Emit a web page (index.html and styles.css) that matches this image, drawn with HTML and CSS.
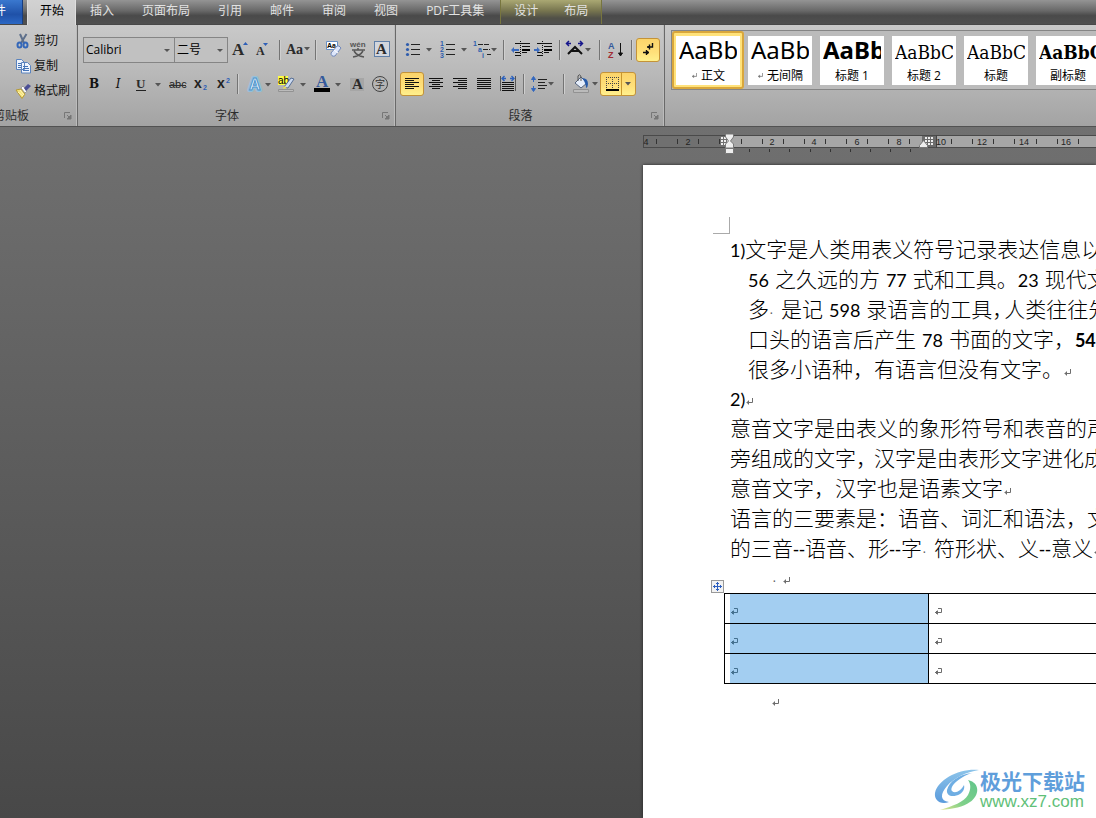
FILE: index.html
```html
<!DOCTYPE html>
<html lang="zh-CN">
<head>
<meta charset="utf-8">
<title>文档编辑</title>
<link rel="stylesheet" href="styles.css">
</head>
<body>
<svg class="defs" aria-hidden="true">
  <defs>
    <symbol id="drop" viewBox="0 0 6 4"><path d="M0 0h6L3 3.600z" fill="#555"/></symbol>
    <symbol id="ret" viewBox="0 0 8 8"><path d="M7.500 0v4.500H1.500M3.500 2.500v4M2.500 3.500v2" fill="none" stroke="#6d6d6d"/></symbol>
    <symbol id="cellret" viewBox="0 0 8 8"><path d="M4 .5h3.500v4H1M3.500 2.500v4M2.500 3v3M1.500 4v1" fill="none" stroke="currentColor"/></symbol>
    <symbol id="launch" viewBox="0 0 8 8"><path d="M.5 6V.5H6" fill="none" stroke="#777"/><path d="M7 3v4H3zM3 3l3 3" fill="#777" stroke="#777"/></symbol>
    <pattern id="dots" width="3" height="3" patternUnits="userSpaceOnUse"><path d="M0 0h2v2H0z" fill="#eee"/></pattern>
    <linearGradient id="swirl" x1="0" y1="0" x2="0" y2="1"><stop offset="0" stop-color="#8cc4ea"/><stop offset="1" stop-color="#5b9bdc"/></linearGradient>
    <linearGradient id="leaf" x1="1" y1="0" x2="0" y2="1"><stop offset="0" stop-color="#62c58b"/><stop offset=".6" stop-color="#7fd08a"/><stop offset="1" stop-color="#e3e48c"/></linearGradient>
  </defs>
</svg>

<nav class="tabs">
  <button class="tab file">文件</button>
  <button class="tab current">开始</button>
  <button class="tab">插入</button>
  <button class="tab">页面布局</button>
  <button class="tab">引用</button>
  <button class="tab">邮件</button>
  <button class="tab">审阅</button>
  <button class="tab">视图</button>
  <button class="tab">PDF工具集</button>
  <div class="context">
    <button class="tab">设计</button>
    <button class="tab">布局</button>
  </div>
</nav>

<header class="ribbon">
  <section class="group clipboard">
    <div class="clip-body">
      <button class="paste">
        <svg width="32" height="32" viewBox="0 0 32 32"><rect x="3" y="3" width="28" height="26" rx="2" fill="#e3a13d" stroke="#a8742a"/><rect x="10" y="1" width="12" height="5" fill="#777"/><path d="M13.500 12.500h13l5 5v14h-18z" fill="#fff" stroke="#6b7f9e"/><path d="M16 20h13M16 23h13M16 26h13" stroke="#9ab2d6"/></svg>
        <span>粘贴</span>
      </button>
      <div class="clip-list">
        <button class="clip">
          <svg width="16" height="16" viewBox="0 0 16 16"><path d="M5 1l4 9M11.500 1L6 10" stroke="#5d6f8b" stroke-width="2" fill="none"/><ellipse cx="4.500" cy="12" rx="2" ry="2.500" fill="none" stroke="#3467b8" stroke-width="2"/><ellipse cx="10.500" cy="12" rx="2" ry="2.500" fill="none" stroke="#3467b8" stroke-width="2"/></svg>剪切</button>
        <button class="clip">
          <svg width="16" height="16" viewBox="0 0 16 16"><path d="M1.500 1.500h5l3 3v7h-8zM6.500 4.500h6l3 3v7.500h-9z" fill="#eef4fd" stroke="#5a83be"/><path d="M3 5.500h3M3 7.500h3M3 9.500h3M8 8.500h5M8 10.500h6M8 12.500h6" stroke="#4474b8"/></svg>复制</button>
        <button class="clip">
          <svg width="16" height="16" viewBox="0 0 16 16"><path d="M1 7l5-1 4 5-3 4.500z" fill="#f5e277" stroke="#b59a37"/><path d="M3 9l5 4M5 7l4 5" stroke="#fff6bc"/><path d="M6 5l2-2 4 5-2 2z" fill="#fff" stroke="#888" stroke-width=".7"/><path d="M9 5l4-4 3 2-5 5z" fill="#4b4f95"/></svg>格式刷</button>
      </div>
    </div>
    <footer class="caption"><span>剪贴板</span><button class="launcher" aria-label="剪贴板选项"><svg width="8" height="8"><use href="#launch"/></svg></button></footer>
  </section>

  <section class="group font">
    <div class="row">
      <label class="combo family"><select aria-label="字体"><option>Calibri</option></select></label>
      <label class="combo size"><select aria-label="字号"><option>二号</option></select></label>
      <button class="tool w24" aria-label="增大字体"><svg width="24" height="24" viewBox="0 0 24 24"><text x="4" y="17" class="glyph g16">A</text><path d="M15 7h5l-2.500-3z" fill="#2d5fb8"/></svg></button>
      <button class="tool w24" aria-label="缩小字体"><svg width="24" height="24" viewBox="0 0 24 24"><text x="4" y="17" class="glyph g12">A</text><path d="M11 5h5l-2.500 3z" fill="#2d5fb8"/></svg></button>
      <i class="sep"></i>
      <button class="tool w28" aria-label="更改大小写"><svg width="28" height="24" viewBox="0 0 28 24"><text x="2" y="16" class="glyph g14">Aa</text><use href="#drop" x="20" y="9" width="6" height="4"/></svg></button>
      <i class="sep wide"></i>
      <button class="tool w24" aria-label="清除格式"><svg width="24" height="24" viewBox="0 0 24 24"><path d="M4.500 3.500h11v8h-11z" fill="#fff" stroke="#678fc5"/><text x="5" y="10" class="aa">Aa</text><path d="M9 15l6-7q2-1 4 2l-6 8q-4 1-4-3z" fill="#dde6fa" stroke="#7289b9"/><path d="M12 12l4 3" stroke="#fff"/></svg></button>
      <button class="tool w24" aria-label="拼音指南"><svg width="24" height="24" viewBox="0 0 24 24"><text x="4" y="9" class="pinyin">wén</text><path d="M6 12h13M12 10v2M8 13q3 5 10 6M17 13q-3 5-10 6" fill="none" stroke="#555" stroke-width="1.500"/></svg></button>
      <button class="tool w24" aria-label="字符边框"><svg width="24" height="24" viewBox="0 0 24 24"><rect x="4.500" y="3.500" width="15" height="15" fill="#d2d6dd" stroke="#5f7fa8"/><text x="6" y="16" class="glyph g15">A</text></svg></button>
    </div>
    <div class="row">
      <button class="tool w24 char bold">B</button>
      <button class="tool w24 char ital">I</button>
      <button class="tool w36" aria-label="下划线"><svg width="36" height="24" viewBox="0 0 36 24"><text x="6" y="16" class="glyph g13">U</text><path d="M6 18.500h10" stroke="#222"/><use href="#drop" x="25" y="11" width="6" height="4"/></svg></button>
      <button class="tool w24" aria-label="删除线"><svg width="24" height="24" viewBox="0 0 24 24"><text x="3" y="16" class="abc">abc</text><path d="M3 13.500h17" stroke="#333"/></svg></button>
      <button class="tool w24" aria-label="下标"><svg width="24" height="24" viewBox="0 0 24 24"><text x="4" y="16" class="script">x</text><text x="13" y="18" class="tiny">2</text></svg></button>
      <button class="tool w20" aria-label="上标"><svg width="20" height="24" viewBox="0 0 20 24"><text x="3" y="16" class="script">x</text><text x="12" y="11" class="tiny">2</text></svg></button>
      <i class="sep wide"></i>
      <button class="tool w32" aria-label="文本效果"><svg width="32" height="24" viewBox="0 0 32 24"><text x="5" y="18" class="halo">A</text><text x="5" y="18" class="glow">A</text><use href="#drop" x="21" y="11" width="6" height="4"/></svg></button>
      <button class="tool w32" aria-label="突出显示"><svg width="32" height="24" viewBox="0 0 32 24"><path d="M2 4h10v9H2z" fill="#ffff45"/><text x="2" y="12" class="ab">ab</text><path d="M8 15l7-9 3 1-6 9z" fill="#ccdaf0" stroke="#586f95"/><path d="M8 14l-1 3 4-1z" fill="#eadb51"/><path d="M2.500 17.500h15v2h-15z" fill="#bbb" stroke="#929292"/><use href="#drop" x="24" y="11" width="6" height="4"/></svg></button>
      <button class="tool w36" aria-label="字体颜色"><svg width="36" height="24" viewBox="0 0 36 24"><text x="8" y="15" class="glyph g16 blue">A</text><path d="M6 16h16v4H6z"/><use href="#drop" x="27" y="11" width="6" height="4"/></svg></button>
      <button class="tool w24" aria-label="字符底纹"><svg width="24" height="24" viewBox="0 0 24 24"><path d="M6 6h14v13H6z" fill="#a6a6a6"/><text x="8" y="17" class="glyph g15">A</text></svg></button>
      <button class="tool w24" aria-label="带圈字符"><svg width="24" height="24" viewBox="0 0 24 24"><circle cx="12" cy="12" r="7.500" fill="none" stroke="#444"/><text x="7" y="16" class="circled">字</text></svg></button>
    </div>
    <footer class="caption"><span>字体</span><button class="launcher" aria-label="字体选项"><svg width="8" height="8"><use href="#launch"/></svg></button></footer>
  </section>

  <section class="group para">
    <div class="row">
      <button class="tool w36" aria-label="项目符号"><svg width="36" height="24" viewBox="0 0 36 24"><path d="M11 6.500h9M11 11.500h9M11 16.500h9" stroke="#222"/><g fill="#2e5cad"><circle cx="7.500" cy="6.500" r="1.600"/><circle cx="7.500" cy="11.500" r="1.600"/><circle cx="7.500" cy="16.500" r="1.600"/></g><use href="#drop" x="26" y="10" width="6" height="4"/></svg></button>
      <button class="tool w36" aria-label="编号"><svg width="36" height="24" viewBox="0 0 36 24"><path d="M10 6.500h9M10 11.500h9M10 16.500h9" stroke="#222"/><text x="4" y="8" class="nums">1</text><text x="4" y="14" class="nums">2</text><text x="4" y="20" class="nums">3</text><use href="#drop" x="25" y="10" width="6" height="4"/></svg></button>
      <button class="tool w28" aria-label="多级列表"><svg width="28" height="24" viewBox="0 0 28 24"><path d="M6 6.500h11M11 11.500h7M15 16.500h4" stroke="#222" stroke-dasharray="5 1"/><text x="1" y="8" class="nums">1</text><text x="6" y="14" class="nums">a</text><text x="10" y="20" class="nums">i</text><use href="#drop" x="19" y="10" width="6" height="4"/></svg></button>
      <i class="sep"></i>
      <button class="tool w24" aria-label="减少缩进"><svg width="24" height="24" viewBox="0 0 24 24"><path d="M7 5.500h15M14 8.500h8M14 14.500h5M7 14.500h5M7 17.500h5" stroke="#111"/><path d="M12.500 3v16" stroke="#111" stroke-dasharray="1 1"/><path d="M14 11h8v2h-8z"/><path d="M6 11h5v2H6v2l-3-3 3-3z" fill="#3a6bc0"/></svg></button>
      <button class="tool w24" aria-label="增加缩进"><svg width="24" height="24" viewBox="0 0 24 24"><path d="M5 5.500h15M12 8.500h8M12 14.500h5M5 14.500h5M5 17.500h5" stroke="#111"/><path d="M10.500 3v16" stroke="#111" stroke-dasharray="1 1"/><path d="M12 11h8v2h-8z"/><path d="M2 11h3V9l3 3-3 3v-2H2z" fill="#3a6bc0"/></svg></button>
      <i class="sep"></i>
      <button class="tool w32" aria-label="中文版式"><svg width="32" height="24" viewBox="0 0 32 24"><path d="M4 16l7-7 7 7M7 13h8" fill="none" stroke="#111" stroke-width="2"/><path d="M3 5.500h4M14 5.500h4M5 3L2.500 5.500 5 8M16 3l2.500 2.500L16 8" fill="none" stroke="#15158c" stroke-width="1.500"/><use href="#drop" x="21" y="10" width="6" height="4"/></svg></button>
      <i class="sep"></i>
      <button class="tool w24" aria-label="排序"><svg width="24" height="24" viewBox="0 0 24 24"><text x="4" y="11" class="sort blue">A</text><text x="4" y="20" class="sort red">Z</text><path d="M16.500 5v12M14.500 15l2 3 2-3z" stroke="#111" fill="#111"/></svg></button>
      <i class="sep"></i>
      <button class="tool w24 on" aria-label="显示编辑标记"><svg width="22" height="22" viewBox="0 0 22 22"><path d="M15.500 4v4H10M12.500 5.500v5M11.500 7v2M6 13.500h6M9.500 11v5M10.500 12v3" fill="none" stroke="#111" stroke-width="1.400"/></svg></button>
    </div>
    <div class="row">
      <button class="tool w24 on" aria-label="左对齐"><svg width="22" height="22" viewBox="0 0 22 22"><path d="M4 5.500h14M4 7.500h9M4 9.500h14M4 11.500h9M4 13.500h14M4 15.500h9" stroke="#111"/></svg></button>
      <button class="tool w24" aria-label="居中"><svg width="24" height="24" viewBox="0 0 24 24"><path d="M5 6.500h14M8 8.500h8M5 10.500h14M8 12.500h8M5 14.500h14M8 16.500h8" stroke="#111"/></svg></button>
      <button class="tool w24" aria-label="右对齐"><svg width="24" height="24" viewBox="0 0 24 24"><path d="M5 6.500h14M10 8.500h9M5 10.500h14M10 12.500h9M5 14.500h14M10 16.500h9" stroke="#111"/></svg></button>
      <button class="tool w24" aria-label="两端对齐"><svg width="24" height="24" viewBox="0 0 24 24"><path d="M5 6.500h14M5 8.500h14M5 10.500h14M5 12.500h14M5 14.500h14M5 16.500h14" stroke="#111"/></svg></button>
      <button class="tool w24" aria-label="分散对齐"><svg width="24" height="24" viewBox="0 0 24 24"><path d="M4.500 4v15M19.500 4v15" stroke="#555"/><path d="M6 10.500h12M6 12.500h12M6 14.500h12M6 16.500h12M6 18.500h12" stroke="#111"/><path d="M6 6.500h4M14 6.500h4M8.500 4L6 6.500 8.500 9M15.500 4L18 6.500 15.500 9" stroke="#2d62bd" stroke-width="1.400" fill="none"/></svg></button>
      <i class="sep"></i>
      <button class="tool w32" aria-label="行距"><svg width="32" height="24" viewBox="0 0 32 24"><path d="M10 7.500h9M10 10.500h7M10 13.500h9M10 16.500h7" stroke="#222"/><path d="M5.500 5v5M5.500 14v5M3.500 7.500l2-3 2 3zM3.500 16.500l2 3 2-3z" stroke="#3267bf" fill="#3267bf"/><use href="#drop" x="20" y="10" width="6" height="4"/></svg></button>
      <i class="sep"></i>
      <button class="tool w32" aria-label="底纹"><svg width="32" height="24" viewBox="0 0 32 24"><path d="M7 11l6-6 6 6-6 5z" fill="#e6eefb" stroke="#53637d"/><path d="M10 9V4q2-3 3 1v4" fill="none" stroke="#555"/><path d="M14 6q6 0 6 6 0 3-2 4 0-5-4-10z" fill="#275ba9"/><path d="M5.500 17.500h15v3h-15z" fill="#bbb" stroke="#929292"/><use href="#drop" x="24" y="10" width="6" height="4"/></svg></button>
      <button class="tool w36 on" aria-label="边框"><svg width="34" height="22" viewBox="0 0 34 22"><path d="M5.500 4v12M17.500 4v12M11.500 4v12M5 4.500h13M5 10.500h13" stroke="#444" stroke-dasharray="1 1"/><path d="M5 16h13v2H5z"/><path d="M20.500 0v22" stroke="#c8962e"/><use href="#drop" x="24" y="9" width="6" height="4"/></svg></button>
    </div>
    <footer class="caption"><span>段落</span><button class="launcher" aria-label="段落选项"><svg width="8" height="8"><use href="#launch"/></svg></button></footer>
  </section>

  <section class="styles">
    <div class="gallery">
      <button class="style picked"><span class="card"><span class="sample sans">AaBb</span><span class="name"><svg width="6" height="6"><use href="#ret"/></svg>正文</span></span></button>
      <button class="style"><span class="card"><span class="sample sans">AaBb</span><span class="name"><svg width="6" height="6"><use href="#ret"/></svg>无间隔</span></span></button>
      <button class="style"><span class="card"><span class="sample sans heavy">AaBb</span><span class="name">标题 1</span></span></button>
      <button class="style"><span class="card"><span class="sample serif">AaBbC</span><span class="name">标题 2</span></span></button>
      <button class="style"><span class="card"><span class="sample serif">AaBbC</span><span class="name">标题</span></span></button>
      <button class="style"><span class="card"><span class="sample serif heavy">AaBbC</span><span class="name">副标题</span></span></button>
    </div>
  </section>
</header>

<main class="desk">
  <svg class="ruler" height="20" aria-label="标尺">
    <rect x="0" y="1" width="100%" height="13" fill="#4a4a4a"/>
    <rect x="1" y="2" width="86" height="11" fill="#707070"/>
    <rect x="87" y="2" width="100%" height="11" fill="#a6a6a6"/>
    <rect x="279" y="2" width="14" height="11" fill="#6c6c6c"/>
    <path d="M293.500 1v13" stroke="#444"/>
    <rect x="78" y="3" width="9" height="9" fill="url(#dots)"/>
    <rect x="282" y="3" width="9" height="9" fill="url(#dots)"/>
    <path class="tick" d="M13.500 5v5M34.500 5v5M55.500 5v5M76.500 5v5M98.500 5v5M119.500 5v5M140.500 5v5M161.500 5v5M182.500 5v5M203.500 5v5M224.500 5v5M245.500 5v5M266.500 5v5M308.500 5v5M329.500 5v5M350.500 5v5M371.500 5v5M393.500 5v5M414.500 5v5M435.500 5v5"/>
    <path class="tick" d="M106.500 15v3M126.500 15v3M146.500 15v3M167.500 15v3M187.500 15v3M207.500 15v3M227.500 15v3M247.500 15v3M267.500 15v3"/>
    <g class="marks"><text x="3" y="11">4</text><text x="45" y="11">2</text><text x="129" y="11">2</text><text x="171" y="11">4</text><text x="214" y="11">6</text><text x="256" y="11">8</text><text x="298" y="11">10</text><text x="339" y="11">12</text><text x="381" y="11">14</text><text x="423" y="11">16</text></g>
    <path d="M82.500 0h8v3l-3 4 3 3v4h-8v-4l3-3-3-4zM82.500 14.500h8v5h-8z" fill="#eee" stroke="#777"/>
    <path d="M276.500 13.500v-2l4-5 4 5v2z" fill="#eee" stroke="#777"/>
  </svg>

  <article class="page">
    <div class="corner"></div>
    <div class="text">
      <p><span class="n">1)</span>文字是人类用表义符号记录表达信息以</p>
      <p class="in"><span class="n after">56</span>之久远的方<span class="n both">77</span>式和工具。<span class="n after">23</span>现代文</p>
      <p class="in">多<span class="dot">·</span>是记<span class="n both">598</span>录语言的工具<span class="tight">，</span>人类往往先</p>
      <p class="in">口头的语言后产生<span class="n both">78</span>书面的文字，<b class="n">54</b></p>
      <p class="in last">很多小语种，有语言但没有文字。<svg class="ret" width="8" height="8"><use href="#ret"/></svg></p>
      <p><span class="n">2)</span><svg class="ret" width="8" height="8"><use href="#ret"/></svg></p>
      <p>意音文字是由表义的象形符号和表音的声</p>
      <p>旁组成的文字<span class="tight mid">，</span>汉字是由表形文字进化成</p>
      <p>意音文字，汉字也是语素文字<svg class="ret" width="8" height="8"><use href="#ret"/></svg></p>
      <p>语言的三要素是：语音、词汇和语法，文</p>
      <p>的三音<span class="dash">--</span>语音、形<span class="dash">--</span>字<span class="dot">·</span>符形状、义<span class="dash">--</span>意义<svg class="ret" width="8" height="8"><use href="#ret"/></svg></p>
      <p class="blank"><span class="dot">·</span><svg class="ret" width="8" height="8"><use href="#ret"/></svg></p>
    </div>
    <div class="table-wrap">
      <button class="mover" aria-label="移动表格"><svg width="11" height="11" viewBox="0 0 11 11"><path d="M5.500 1v9M1 5.500h9M4 2.500h3M4 8.500h3M2.500 4v3M8.500 4v3" stroke="#2c5ec0" fill="none"/></svg></button>
      <table class="grid">
        <colgroup><col class="first"><col></colgroup>
        <tr><td class="sel"><div class="cell"><svg width="8" height="8"><use href="#cellret"/></svg></div></td><td><div class="cell"><svg width="8" height="8"><use href="#cellret"/></svg></div></td></tr>
        <tr><td class="sel"><div class="cell"><svg width="8" height="8"><use href="#cellret"/></svg></div></td><td><div class="cell"><svg width="8" height="8"><use href="#cellret"/></svg></div></td></tr>
        <tr><td class="sel"><div class="cell"><svg width="8" height="8"><use href="#cellret"/></svg></div></td><td><div class="cell"><svg width="8" height="8"><use href="#cellret"/></svg></div></td></tr>
      </table>
    </div>
    <div class="tail"><svg width="8" height="8"><use href="#ret"/></svg></div>
  </article>
</main>

<div class="brand">
  <svg width="46" height="44" viewBox="0 0 46 44"><path d="M45 2C26 0 4 11 1 25c-1 7 5 12 14 9C6 33 6 26 13 18 20 10 32 4 45 2z" fill="url(#swirl)"/><path d="M38 5C25 6 15 14 13 22c-1 6 6 8 13 4 3-2 5-5 4-9-3 6-9 9-12 6-3-4 7-14 20-18z" fill="#6faee3"/><path d="M34 12c13 3 11 16 2 22-7 5-16 7-30 8 13-4 24-8 28-15 3-6 3-11 0-15z" fill="url(#leaf)"/></svg>
  <div class="brand-text"><strong>极光下载站</strong><span>www.xz7.com</span></div>
</div>
</body>
</html>
```
FILE: styles.css
```css
* { box-sizing: border-box; }

body {
  margin: 0;
  height: 100vh;
  display: flex;
  flex-direction: column;
  overflow: hidden;
  position: relative;
  background: #5a5a5a;
  font: 12px/18px "Open Sans", "Noto Sans CJK SC", sans-serif;
  color: #111;
}

button {
  margin: 0;
  padding: 0;
  border: 0;
  background: none;
  font: inherit;
  color: inherit;
  white-space: nowrap;
  flex: none;
}

svg { display: block; flex: none; }
p { margin: 0; }
.defs { position: absolute; width: 0; height: 0; }

/* Tab strip */
.tabs {
  display: flex;
  flex: none;
  height: 25px;
  background: linear-gradient(#949494, #686868 45%, #4a4a4a 65%, #505050);
  border-bottom: 1px solid #484848;
}
.tab { padding: 0 14px 2px; color: #e2e2e2; }
.tab.file {
  margin-left: -34px;
  padding: 0 16px 2px;
  background: linear-gradient(#3a78cf, #1f51a8 60%, #2c68c4);
  border-right: 1px solid #173d80;
  color: #fff;
}
.tab.current {
  margin: 0 0 -1px 4px;
  padding: 0 11px 3px 12px;
  background: linear-gradient(#d2d2d2, #c8c8c8);
  border: 1px solid #dedede;
  border-width: 0 1px;
  color: #000;
}
.context {
  display: flex;
  margin-left: 2px;
  background: linear-gradient(#aaa873, #77754f 45%, #505047 75%, #505050);
  border: 1px solid #77753f;
  border-width: 0 1px;
}
.context .tab { padding: 0 13px 2px; }

/* Ribbon */
.ribbon {
  display: flex;
  flex: none;
  height: 102px;
  background: linear-gradient(#c9c9c9, #b8b8b8 50%, #a3a3a3);
  border-bottom: 1px solid #525252;
}
.group {
  flex: none;
  display: flex;
  flex-direction: column;
  border-right: 1px solid #696969;
  box-shadow: inset -1px 0 #bcbcbc;
}
.clipboard { width: 130px; margin-left: -52px; }
.font { width: 318px; padding: 13px 0 0 4px; }
.para { width: 269px; padding: 13px 0 0 4px; }
.row { display: flex; align-items: center; height: 24px; margin-bottom: 10px; }
.caption {
  display: flex;
  align-items: center;
  margin-top: auto;
  margin-left: -4px;
  height: 20px;
  padding-right: 5px;
  color: #2d2d2d;
}
.caption span { flex: 1; padding-right: 6px; text-align: center; }
.clipboard .caption span { padding: 0 0 0 14px; }
.clip-body { display: flex; padding-top: 3px; }
.paste { display: flex; flex-direction: column; align-items: center; width: 67px; padding-top: 1px; gap: 6px; }
.clip { display: flex; align-items: center; gap: 3px; height: 25px; }

.combo {
  position: relative;
  height: 26px;
  border: 1px solid #858585;
  background: #c1c1c1;
}
.combo::after {
  content: "";
  position: absolute;
  right: 4px;
  top: 11px;
  border: 3px solid transparent;
  border-top-color: #555;
}
.combo select {
  appearance: none;
  width: 100%;
  height: 100%;
  padding: 0 2px;
  border: 0;
  background: none;
  font: inherit;
  color: #000;
}
.family { width: 92px; margin-left: 1px; }
.size { width: 54px; margin-left: -1px; }

.tool { display: flex; align-items: center; justify-content: center; height: 24px; }
.w20 { width: 20px; }
.w24 { width: 24px; }
.w28 { width: 28px; }
.w32 { width: 32px; }
.w36 { width: 36px; }
.on {
  border: 1px solid #c49338;
  border-radius: 3px;
  background: linear-gradient(#fbd46a, #ffe07a 60%, #fff08c);
}
.sep {
  flex: none;
  width: 8px;
  height: 20px;
  background: linear-gradient(90deg, transparent 3px, #747474 3px 4px, #cfcfcf 4px 5px, transparent 5px);
}
.sep.wide { width: 10px; }

.char { font: bold 12px/24px "DejaVu Serif", serif; }
.ital { font-weight: normal; font-style: italic; }
.glyph { font-family: "Liberation Serif", serif; font-weight: bold; fill: #2b2b2b; }
.g12 { font-size: 12px; }
.g13 { font-size: 13px; }
.g14 { font-size: 14px; }
.g15 { font-size: 15px; }
.g16 { font-size: 17px; }
.aa { font: bold 7px "Liberation Sans", sans-serif; }
.pinyin { font: bold 8px "Liberation Sans", sans-serif; fill: #555; }
.abc { font: 11px "Liberation Sans", sans-serif; fill: #222; }
.ab { font: 10px "Liberation Sans", sans-serif; }
.script { font: bold 14px "Liberation Sans", sans-serif; fill: #222; }
.tiny { font: bold 7px "Liberation Sans", sans-serif; fill: #2d5fb8; }
.nums { font: bold 7px "Liberation Sans", sans-serif; fill: #2e5cad; }
.sort { font: bold 9px "Liberation Sans", sans-serif; }
.circled { font: 10px "Noto Sans CJK SC", sans-serif; fill: #333; }
.blue { fill: #34599b; }
.red { fill: #a12b34; }
.glow { font: bold 16px "Liberation Sans", sans-serif; fill: #eef7ff; stroke: #4c93cc; stroke-width: 1px; }
.halo { font: bold 16px "Liberation Sans", sans-serif; fill: none; stroke: #8ac6ea; stroke-width: 4px; stroke-linejoin: round; opacity: .7; }

/* Style gallery */
.styles { flex: 1; min-width: 0; padding: 5px 0 0 6px; }
.gallery {
  display: flex;
  height: 60px;
  overflow: hidden;
  background: #bbb;
  border: 1px solid #858585;
  border-right: 0;
}
.style { width: 72px; height: 58px; padding: 4px; }
.style.picked {
  padding: 2px;
  border: 2px solid #d9a73c;
  border-radius: 3px;
  background: #ffe27a;
}
.card { display: block; width: 64px; height: 49px; padding: 0 3px; background: #fff; overflow: hidden; color: #000; }
.sample { display: block; height: 31px; overflow: hidden; text-align: left; }
.sans { font: 24px/28px "Noto Sans", sans-serif; }
.serif { font: 19px/32px "DejaVu Serif Condensed", "DejaVu Serif", serif; }
.heavy { font-weight: bold; }
.name { display: flex; align-items: center; justify-content: center; gap: 4px; height: 18px; line-height: 18px; }

/* Document area */
.desk {
  flex: 1;
  min-height: 0;
  display: flex;
  flex-direction: column;
  padding: 7px 0 0 643px;
  background: linear-gradient(#707070, #484848);
}
.ruler { width: 100%; margin-bottom: 11px; }
.tick { stroke: #333; fill: none; }
.marks { font: 9px "Liberation Sans", sans-serif; text-anchor: middle; fill: #222; }
.page {
  flex: 1;
  min-height: 0;
  padding: 52px 0 0 87px;
  overflow: hidden;
  background: #fff;
  box-shadow: 0 0 3px #222;
}
.corner {
  width: 17px;
  height: 17px;
  margin: 0 0 -1px -17px;
  border: 1px solid #aaa;
  border-width: 0 1px 1px 0;
}
.text {
  font: 300 21px/30px "Noto Sans CJK SC", sans-serif;
  color: #000;
  white-space: nowrap;
}
.text p { height: 30px; }
.text .in { padding-left: 18px; }
.text .last { height: 29px; }
.n { font-family: Lato, sans-serif; font-size: 18px; font-weight: 400; }
b.n { font-weight: 700; }
.after { margin-right: 6px; }
.both { margin: 0 6px; }
.dot { display: inline-block; width: 12px; color: #666; font-family: "Liberation Sans", sans-serif; font-size: 14px; }
.dash { font-family: "Liberation Sans", sans-serif; font-size: 18px; }
.tight { display: inline-block; width: 12px; }
.tight.mid { width: 18px; }
.ret { display: inline-block; }
.text .blank { height: 32px; padding-left: 42px; line-height: 29px; }
.blank .dot { width: 10px; }

.table-wrap { position: relative; margin: -1px 0 0 -6px; }
.mover {
  position: absolute;
  left: -13px;
  top: -13px;
  width: 13px;
  height: 13px;
  border: 1px solid #999;
  background: #f2f2f2;
}
.grid { width: 140%; table-layout: fixed; border-collapse: collapse; }
.first { width: 204px; }
.grid td { height: 30px; padding: 0 0 0 5px; border: 1px solid #000; color: #6d6d6d; }
.cell { display: flex; align-items: center; height: 29px; padding-top: 6px; }
.sel .cell { background: #a3cef1; color: #44708f; }
.tail { padding: 15px 0 0 41px; }

/* Site mark */
.brand {
  position: absolute;
  right: 10px;
  bottom: 6px;
  display: flex;
  align-items: center;
}
.brand-text { display: flex; flex-direction: column; width: 106px; white-space: nowrap; }
.brand strong { font: bold 21px/24px "Noto Sans CJK SC", sans-serif; color: #5f9edb; }
.brand span { font: 17px/20px "Liberation Sans", sans-serif; color: #5fc078; }
```
